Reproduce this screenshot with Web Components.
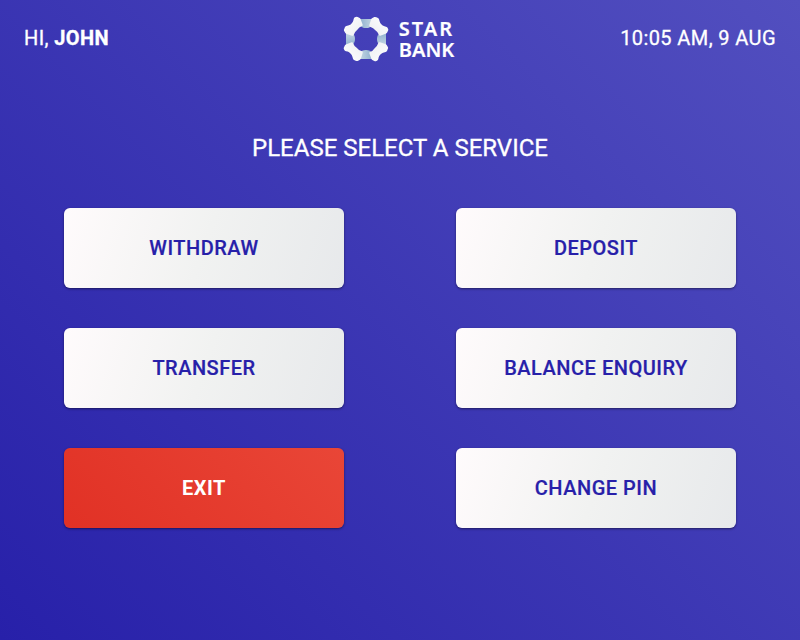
<!DOCTYPE html>
<html lang="en">
<head>
<meta charset="utf-8">
<title>Star Bank</title>
<style>
html,body{margin:0;height:100%}
body{font-family:Roboto,"Liberation Sans",sans-serif;overflow:hidden}
</style>
</head>
<body>
<atm-screen></atm-screen>
<script>
const define = (name, html) => {
  const template = document.createElement('template');
  template.innerHTML = html;
  customElements.define(name, class extends HTMLElement {
    constructor() {
      super();
      this.attachShadow({mode: 'open'}).append(template.content.cloneNode(true));
    }
  });
};

define('bank-logo', `
<style>
:host{display:flex;align-items:center;gap:10px;padding-right:3px;color:#fff}
svg{display:block;width:46px;height:46px;flex:none}
div{font:600 20px/21px "Noto Sans","Open Sans",sans-serif}
span{display:block;white-space:nowrap}
.star{letter-spacing:2px}
</style>
<svg viewBox="0 0 138 138">
  <defs>
    <linearGradient id="w" x1="0" y1="0" x2="1" y2="1"><stop offset="0" stop-color="#fff"/><stop offset="1" stop-color="#eceef1"/></linearGradient>
    <linearGradient id="b" x1="0" y1="0" x2="1" y2="0"><stop offset="0" stop-color="#8fb0cf"/><stop offset="1" stop-color="#c3d6e2"/></linearGradient>
    <path id="joint" d="M50 9 H88 V26 Q82 36 69 36 Q56 36 50 26Z"/>
    <path id="arm" d="M38 3 Q41 1 44 3 L50 6 Q52 7 53 10 L59 26 Q60 29 57 30 Q48 33 43 41 Q36 46 32 57 Q31 60 27 59 L11 54 Q8 53 7 51 L3 44 Q2 41 4 38 L6 33 Q7 31 10 30 C18 28 23 26 25 23 C29 19 31 16 32 9 Q33 5 36 4Z"/>
  </defs>
  <g fill="url(#b)">
    <use href="#joint"/><use href="#joint" transform="rotate(90 69 69)"/>
    <use href="#joint" transform="rotate(180 69 69)"/><use href="#joint" transform="rotate(270 69 69)"/>
  </g>
  <g fill="url(#w)">
    <use href="#arm"/><use href="#arm" transform="rotate(90 69 69)"/>
    <use href="#arm" transform="rotate(180 69 69)"/><use href="#arm" transform="rotate(270 69 69)"/>
  </g>
</svg>
<div><span class="star">STAR</span><span>BANK</span></div>`);

define('top-bar', `
<style>
:host{display:grid;grid-template-columns:1fr auto 1fr;align-items:center;height:78px;padding:0 24px;font-size:20px;line-height:24px;letter-spacing:.4px;color:#fff;-webkit-text-stroke:.3px #fff}
bank-logo{letter-spacing:0;-webkit-text-stroke:.2px #fff}
.left,.right{padding-bottom:2px;white-space:nowrap}
.right{text-align:right}
</style>
<div class="left"><slot name="greeting"></slot></div><bank-logo></bank-logo><div class="right"><slot name="time"></slot></div>`);

define('service-button', `
<style>
:host{display:block;height:80px}
button{box-sizing:border-box;display:block;width:100%;height:100%;margin:0;border:0;padding:0;border-radius:6px;
font:500 20px/24px Roboto,sans-serif;letter-spacing:.5px;color:#2720a9;-webkit-text-stroke:.2px currentColor;
background:linear-gradient(109deg,#fffbfc,#f1f2f1 50%,#e7e9eb);
box-shadow:0 1px 3px rgba(0,0,0,.2),0 1px 2px rgba(0,0,0,.3)}
:host([danger]) button{color:#fff;font-weight:700;-webkit-text-stroke:0;background:linear-gradient(45deg,#e13125,#e94637)}
</style>
<button type="button"><slot></slot></button>`);

define('service-menu', `
<style>
:host{display:block;padding:56px 64px 0;color:#fff}
h1{margin:0 0 46px;font-size:24px;line-height:28px;font-weight:400;text-align:center;-webkit-text-stroke:.3px #fff}
.grid{display:grid;grid-template-columns:280px 280px;justify-content:space-between;row-gap:40px}
</style>
<h1><slot name="title"></slot></h1><div class="grid"><slot></slot></div>`);

define('atm-screen', `
<style>
:host{display:block;width:800px;height:640px;background:linear-gradient(45deg,#2720a9,#524fbf)}
b{font-weight:700}
</style>
<top-bar><span slot="greeting">HI, <b>JOHN</b></span><span slot="time">10:05 AM, 9 AUG</span></top-bar>
<service-menu>
  <span slot="title">PLEASE SELECT A SERVICE</span>
  <service-button>WITHDRAW</service-button><service-button>DEPOSIT</service-button>
  <service-button>TRANSFER</service-button><service-button>BALANCE ENQUIRY</service-button>
  <service-button danger>EXIT</service-button><service-button>CHANGE PIN</service-button>
</service-menu>`);
</script>
</body>
</html>
